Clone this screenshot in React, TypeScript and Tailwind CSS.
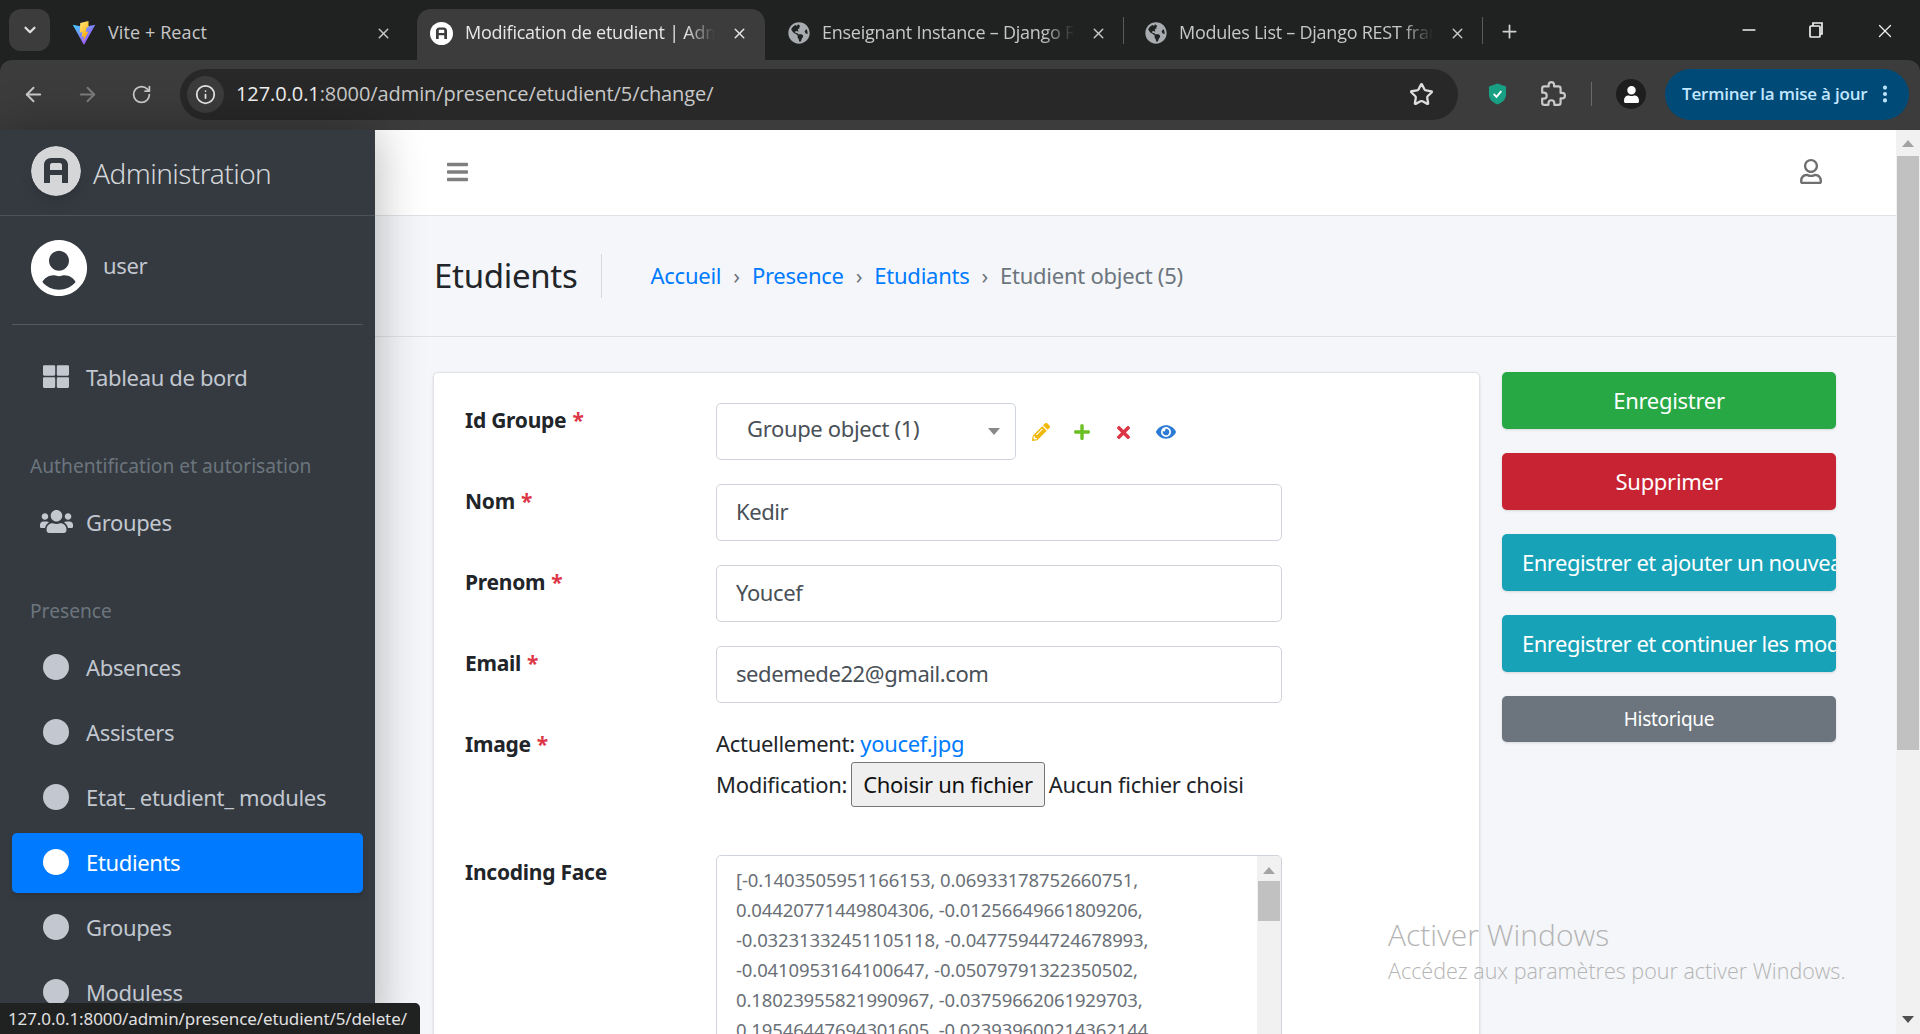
import React from 'react';
import { ArrowLeft, ArrowRight, RotateCw, Info, Star, X, Plus, Minus, EllipsisVertical, ChevronDown } from 'lucide-react';
import { FaGlobeAmericas, FaThLarge, FaUsers, FaUserCircle, FaRegUser, FaPencilAlt, FaPlus, FaTimes, FaEye, FaBars, FaUser } from 'react-icons/fa';

// Round "A" mark used for the favicon and the sidebar brand
function AdminLogo({ className, ink }: { className: string; ink: string }) {
  return (
    <svg viewBox="0 0 50 50" className={className}>
      <circle cx="25" cy="25" r="25" fill="currentColor" />
      <path d="M13 37V19c0-4 3-7 7-7h10c4 0 7 3 7 7v18h-6v-8H19v8zM19 24h12v-5c0-1-1-2-2-2h-8c-1 0-2 1-2 2z" fill={ink} fillRule="evenodd" />
    </svg>
  );
}

function ViteLogo() {
  return (
    <svg viewBox="0 0 32 32" className="w-6 h-6 shrink-0">
      <defs>
        <linearGradient id="viteA" x1="0" y1="0" x2="1" y2="1">
          <stop offset="0" stopColor="#41d1ff" />
          <stop offset="1" stopColor="#bd34fe" />
        </linearGradient>
        <linearGradient id="viteB" x1="0" y1="0" x2="0.5" y2="1">
          <stop offset="0" stopColor="#ffea83" />
          <stop offset="1" stopColor="#ffa800" />
        </linearGradient>
      </defs>
      <path d="M1 5l15 3 15-3-14.5 26c-.3.5-1 .5-1.200 0z" fill="url(#viteA)" />
      <path d="M22 0L11 2.500l-.7 13 3.500-.8-1 6.500 3.200-.8-1.200 7L22 14l-3.800.8 1.300-6 2.500-.7z" fill="url(#viteB)" />
    </svg>
  );
}

function Tab({ icon, title, width, active, divider }: { icon: React.ReactNode; title: string; width: string; active?: boolean; divider?: boolean }) {
  return (
    <div className={`relative flex items-center h-[51px] shrink-0 pl-[13px] pr-[17px] rounded-t-[14px] ${width} ${active ? 'bg-[#3c3c3c] text-[#e6e6e6] pr-[15px]' : 'text-[#c7c7c7]'}`}>
      {icon}
      <div className="flex-1 min-w-0 ml-3 overflow-hidden whitespace-nowrap text-[18px] tracking-[-0.25px] mb-[5px] [mask-image:linear-gradient(to_right,black_88%,transparent)]">{title}</div>
      <X className="w-[17px] h-[17px] ml-4 mb-[3px] shrink-0" />
      {divider && <div className="absolute right-0 top-[8px] w-px h-[27px] bg-[#5a5a5a]" />}
    </div>
  );
}

function ChromeBar() {
  return (
    <div className="h-[130px] shrink-0 bg-[#202222] font-['Open_Sans',sans-serif]">
      <div className="h-[60px] flex pt-[9px] pl-[9px]">
        <div className="w-[41px] h-[42px] rounded-xl bg-[#3c3c3c] flex items-center justify-center text-[#e0e0e0] mr-[9px] shrink-0">
          <ChevronDown className="w-[18px] h-[18px]" strokeWidth={3} />
        </div>
        <div className="w-[358px] flex items-center h-[51px] pl-[13px] pr-[25px] text-[#c7c7c7] shrink-0">
          <div className="mb-[4px]"><ViteLogo /></div>
          <div className="flex-1 ml-3 text-[18px] tracking-[0.1px] whitespace-nowrap mb-[5px]">Vite + React</div>
          <X className="w-[17px] h-[17px] mb-[3px]" />
        </div>
        <Tab width="w-[348px]" active title="Modification de etudient | Administration" icon={<AdminLogo className="w-[23px] h-[23px] mb-[3px] shrink-0 text-white" ink="#3c3c3c" />} />
        <Tab width="w-[359px]" divider title="Enseignant Instance – Django REST framework" icon={<FaGlobeAmericas className="w-[22px] h-[22px] mb-[4px] ml-[10px] shrink-0 text-[#a8abaf]" />} />
        <Tab width="w-[359px]" divider title="Modules List – Django REST framework" icon={<FaGlobeAmericas className="w-[22px] h-[22px] mb-[4px] ml-2 shrink-0 text-[#a8abaf]" />} />
        <Plus className="w-[21px] h-[21px] ml-4 mt-[12px] text-[#d0d0d0]" />
        <div className="flex-1" />
        <div className="flex items-start text-[#eeeeee] mt-[11px]">
          <Minus className="w-5 h-5 mr-[47px]" />
          <svg viewBox="0 0 20 20" className="w-5 h-5 mr-[48px]" fill="none" stroke="currentColor" strokeWidth="1.700">
            <rect x="4" y="6" width="10" height="11" rx="1" />
            <path d="M7 6V3h9v11h-2" />
          </svg>
          <X className="w-[22px] h-[22px] mr-[24px]" strokeWidth={1.4} />
        </div>
      </div>
      <div className="h-[70px] bg-[#3c3c3c] rounded-t-xl flex items-center pb-[2px]">
        <ArrowLeft className="w-[23px] h-[23px] ml-[22px] text-[#c9c9c9]" />
        <ArrowRight className="w-[23px] h-[23px] ml-[31px] text-[#7c7c7c]" />
        <RotateCw className="w-[21px] h-[21px] ml-[32px] text-[#c9c9c9]" />
        <div className="ml-[28px] w-[1278px] h-[51px] rounded-full bg-[#282828] flex items-center pl-[7px] pr-[24px]">
          <div className="w-[37px] h-[37px] rounded-full bg-[#3c3c3c] flex items-center justify-center">
            <Info className="w-[21px] h-[21px] text-[#e6e6e6]" />
          </div>
          <div className="ml-[12px] flex-1 text-[20px] tracking-[-0.08px] text-[#c8c8c8] whitespace-nowrap">
            <span className="text-[#f0f0f0]">127.0.0.1</span>:8000/admin/presence/etudient/5/change/
          </div>
          <Star className="w-[25px] h-[25px] text-[#dddddd]" strokeWidth={2.2} />
        </div>
        <svg viewBox="0 0 20 24" className="w-[19px] h-[24px] ml-[30px]">
          <path d="M10 1l9 3v8c0 6-4 9-9 11C5 21 1 18 1 12V4z" fill="#17a084" />
          <path d="M6 12l3 3 5-6" fill="none" stroke="#ffffff" strokeWidth="2" />
        </svg>
        <svg viewBox="0 0 24 24" className="w-[26px] h-[26px] ml-[33px] text-[#c9c9c9]" fill="none" stroke="currentColor" strokeWidth="2" strokeLinejoin="round">
          <path d="M20.500 11H19V7c0-1.100-.9-2-2-2h-4V3.500C13 2.120 11.880 1 10.500 1S8 2.120 8 3.500V5H4c-1.100 0-1.990.9-1.990 2v3.800H3.500c1.490 0 2.700 1.210 2.700 2.700s-1.210 2.700-2.700 2.700H2V20c0 1.100.9 2 2 2h3.800v-1.500c0-1.490 1.210-2.700 2.700-2.700 1.490 0 2.700 1.210 2.700 2.700V22H17c1.100 0 2-.9 2-2v-4h1.500c1.380 0 2.500-1.120 2.500-2.500S21.880 11 20.500 11z" />
        </svg>
        <div className="w-px h-[24px] ml-[25px] bg-[#6a6a6a]" />
        <div className="w-[30px] h-[30px] ml-[24px] rounded-full bg-[#1e1e1e] flex items-center justify-center">
          <FaUser className="w-[17px] h-[17px] text-white" />
        </div>
        <div className="ml-[19px] w-[244px] h-[51px] rounded-full bg-[#004a77] flex items-center pl-[17px] text-[#c2e7ff]">
          <span className="text-[17px] font-semibold tracking-[-0.2px] whitespace-nowrap">Terminer la mise à jour</span>
          <EllipsisVertical className="w-[22px] h-[22px] ml-[7px]" strokeWidth={2.5} />
        </div>
      </div>
    </div>
  );
}

function NavItem({ label, icon, active }: { label: string; icon?: React.ReactNode; active?: boolean }) {
  return (
    <div className={`mx-3 h-[60px] mb-[5px] rounded-[5px] flex items-center pl-[31px] ${active ? 'bg-[#007bff] text-white shadow-md' : 'text-[#c2c7d0]'}`}>
      <div className="w-[26px] flex justify-center shrink-0 -mt-[3px]">
        {icon ?? <div className={`w-[26px] h-[26px] rounded-full ${active ? 'bg-white' : 'bg-[#c2c7d0]'}`} />}
      </div>
      <span className="ml-[17px] text-[22px] tracking-[-0.35px] whitespace-nowrap -mt-[2px]">{label}</span>
    </div>
  );
}

function Sidebar() {
  return (
    <aside className="relative z-10 w-[375px] shrink-0 bg-[#343a40] shadow-[0_0_45px_rgba(0,0,0,0.3)] overflow-hidden">
      <div className="h-[86px] border-b border-[#4b545c] flex items-start pl-[31px] pt-[16px]">
        <AdminLogo className="w-[50px] h-[50px] text-[#d4d6d8] shadow-lg rounded-full" ink="#343a40" />
        <span className="ml-3 mt-[6px] text-[28px] font-light tracking-[-0.55px] text-[#d3d6d9] whitespace-nowrap">Administration</span>
      </div>
      <div className="mx-3 mt-[23px] h-[86px] border-b border-[#4f5962] flex items-start pl-[18px]">
        <FaUserCircle className="w-[58px] h-[58px] text-white" />
        <span className="ml-[15px] mt-[10px] text-[22px] tracking-[-0.35px] text-[#c2c7d0]">user</span>
      </div>
      <div className="mt-[23px]">
        <NavItem label="Tableau de bord" icon={<FaThLarge className="w-[27px] h-[27px]" />} />
        <div className="mt-[38px] mb-[7px] h-10 flex items-center pl-[30px] text-[19.200px] text-[#6c757d] whitespace-nowrap">Authentification et autorisation</div>
        <NavItem label="Groupes" icon={<FaUsers className="w-[33px] h-[33px] shrink-0" />} />
        <div className="mt-[38px] mb-[7px] h-10 flex items-center pl-[30px] text-[19.200px] text-[#6c757d]">Presence</div>
        <NavItem label="Absences" />
        <NavItem label="Assisters" />
        <NavItem label="Etat_ etudient_ modules" />
        <NavItem label="Etudients" active />
        <NavItem label="Groupes" />
        <NavItem label="Moduless" />
      </div>
    </aside>
  );
}

function Field({ label, required, children }: { label: string; required?: boolean; children: React.ReactNode }) {
  return (
    <div className="flex mb-6">
      <div className="w-[251px] shrink-0 h-9 leading-[35px] text-[21px] font-bold tracking-[-0.25px] text-[#212529] whitespace-nowrap">
        {label}
        {required && <span className="text-[#dc3545] ml-[6px]">*</span>}
      </div>
      {children}
    </div>
  );
}

function TextInput({ value }: { value: string }) {
  return (
    <input
      readOnly
      value={value}
      className="w-[566px] h-[57px] px-[19px] pb-[4px] border border-[#ced4da] rounded-[5px] text-[22px] tracking-[-0.42px] text-[#495057] bg-white outline-none"
    />
  );
}

const encodings = [
  '[-0.1403505951166153, 0.06933178752660751,',
  '0.04420771449804306, -0.01256649661809206,',
  '-0.03231332451105118, -0.04775944724678993,',
  '-0.0410953164100647, -0.05079791322350502,',
  '0.18023955821990967, -0.03759662061929703,',
  '0.19546447694301605, -0.023939600214362144,',
];

function ActionButton({ label, color, small, left }: { label: string; color: string; small?: boolean; left?: boolean }) {
  return (
    <div className={`${color} rounded-[5px] text-white flex items-center overflow-hidden whitespace-nowrap shadow-sm ${small ? 'h-[46px] text-[19px]' : 'h-[57px] text-[22px]'} ${left ? 'pl-5 tracking-[-0.5px]' : 'justify-center tracking-[-0.3px]'}`}>
      {label}
    </div>
  );
}

function Content() {
  return (
    <main className="flex-1 min-w-0 bg-[#f4f6f9] overflow-hidden">
      <div className="h-[86px] bg-white border-b border-[#dee2e6] flex items-center justify-between pl-[72px] pr-[74px] pb-[2px]">
        <FaBars className="w-[21px] h-[24px] text-[#7f7f7f]" />
        <FaRegUser className="w-[22px] h-[25px] text-[#6f6f6f]" />
      </div>
      <div className="h-[121px] border-b border-[#dee2e6] flex items-center pl-[59px]">
        <h1 className="text-[33px] tracking-[-0.3px] text-[#212529] pr-[23px] h-[44px] leading-[44px] border-r border-[#d5d8dc] whitespace-nowrap">Etudients</h1>
        <div className="ml-[49px] text-[22px] tracking-[-0.25px] text-[#6c757d] flex items-center whitespace-nowrap -mt-[2px]">
          <span className="text-[#007bff]">Accueil</span>
          <span className="mx-[12px]">›</span>
          <span className="text-[#007bff]">Presence</span>
          <span className="mx-[12px]">›</span>
          <span className="text-[#007bff]">Etudiants</span>
          <span className="mx-[12px]">›</span>
          <span>Etudient object (5)</span>
        </div>
      </div>
      <div className="flex items-start pl-[58px] pt-[35px]">
        <div className="w-[1047px] h-[800px] shrink-0 bg-white border border-[#dfe2e6] rounded-[5px] shadow-sm pl-[31px] pt-[30px]">
          <Field label="Id Groupe" required>
            <div className="w-[300px] h-[57px] border border-[#ced4da] rounded-[5px] flex items-center pl-[30px] pr-[15px] text-[22px] tracking-[-0.35px] text-[#495057] pb-[6px]">
              <span className="flex-1 whitespace-nowrap">Groupe object (1)</span>
              <div className="w-0 h-0 border-x-[6px] border-x-transparent border-t-[7px] border-t-[#888888] mt-[6px]" />
            </div>
            <div className="flex items-center ml-[16px] gap-[23px] mt-[1px]">
              <FaPencilAlt className="w-[18px] h-[18px] text-[#f0b90b]" />
              <FaPlus className="w-[18px] h-[18px] text-[#6cc024]" />
              <FaTimes className="w-[19px] h-[19px] text-[#dc3545]" />
              <FaEye className="w-[20px] h-[20px] text-[#2b7bd6]" />
            </div>
          </Field>
          <Field label="Nom" required><TextInput value="Kedir" /></Field>
          <Field label="Prenom" required><TextInput value="Youcef" /></Field>
          <Field label="Email" required><TextInput value="sedemede22@gmail.com" /></Field>
          <Field label="Image" required>
            <div className="text-[22px] tracking-[-0.3px] text-[#212529] h-[104px]">
              <div className="h-[35px] leading-[33px]">Actuellement: <span className="text-[#007bff]">youcef.jpg</span></div>
              <div className="flex items-center whitespace-nowrap">
                Modification:
                <button className="h-[45px] px-[11px] mx-[4px] bg-[#efefef] border border-[#767676] rounded-[3px] text-[#111111]">Choisir un fichier</button>
                Aucun fichier choisi
              </div>
            </div>
          </Field>
          <Field label="Incoding Face">
            <div className="relative w-[566px] h-[300px] border border-[#ced4da] rounded-[5px] pl-[19px] pt-[9px] overflow-hidden text-[18.500px] tracking-[-0.12px] text-[#6a7077] leading-[30px] whitespace-nowrap">
              {encodings.map((line) => <div key={line}>{line}</div>)}
              <div className="absolute right-0 top-0 bottom-0 w-6 bg-[#f1f1f1]">
                <div className="mx-auto mt-[11px] w-0 h-0 border-x-[6px] border-x-transparent border-b-[7px] border-b-[#a3a3a3]" />
                <div className="mt-[7px] mx-[1px] h-[40px] bg-[#c1c1c1]" />
              </div>
            </div>
          </Field>
        </div>
        <div className="w-[334px] ml-[22px] shrink-0 flex flex-col gap-6">
          <ActionButton label="Enregistrer" color="bg-[#28a745]" />
          <ActionButton label="Supprimer" color="bg-[#c82333]" />
          <ActionButton label="Enregistrer et ajouter un nouveau" color="bg-[#17a2b8]" left />
          <ActionButton label="Enregistrer et continuer les modifications" color="bg-[#17a2b8]" left />
          <ActionButton label="Historique" color="bg-[#6c757d]" small />
        </div>
      </div>
    </main>
  );
}

function PageScrollbar() {
  return (
    <div className="w-6 shrink-0 bg-[#f1f1f1] flex flex-col items-center">
      <div className="mt-[10px] w-0 h-0 border-x-[6px] border-x-transparent border-b-[7px] border-b-[#a3a3a3]" />
      <div className="mt-[9px] w-[22px] h-[594px] bg-[#c1c1c1]" />
      <div className="flex-1" />
      <div className="mb-[11px] w-0 h-0 border-x-[6px] border-x-transparent border-t-[7px] border-t-[#505050]" />
    </div>
  );
}

export default function App() {
  return (
    <div className="relative h-screen flex flex-col overflow-hidden font-['Noto_Sans',sans-serif]">
      <ChromeBar />
      <div className="flex flex-1 min-h-0">
        <Sidebar />
        <Content />
        <PageScrollbar />
      </div>
      {/* status bubble, bottom left of the window */}
      <div className="absolute z-20 left-0 bottom-0 w-[420px] h-[31px] bg-[#202222] rounded-tr-[5px] pl-2 text-[17px] tracking-[-0.1px] leading-[31px] text-[#e0e0e0] whitespace-nowrap">
        127.0.0.1:8000/admin/presence/etudient/5/delete/
      </div>
      {/* Windows activation watermark */}
      <div className="absolute z-20 left-[1388px] top-[915px] text-[#b4b4b4] font-['Open_Sans',sans-serif] font-light whitespace-nowrap pointer-events-none">
        <div className="text-[30px] leading-[40px]">Activer Windows</div>
        <div className="text-[21.500px] leading-[30px] mt-[1px]">Accédez aux paramètres pour activer Windows.</div>
      </div>
    </div>
  );
}
